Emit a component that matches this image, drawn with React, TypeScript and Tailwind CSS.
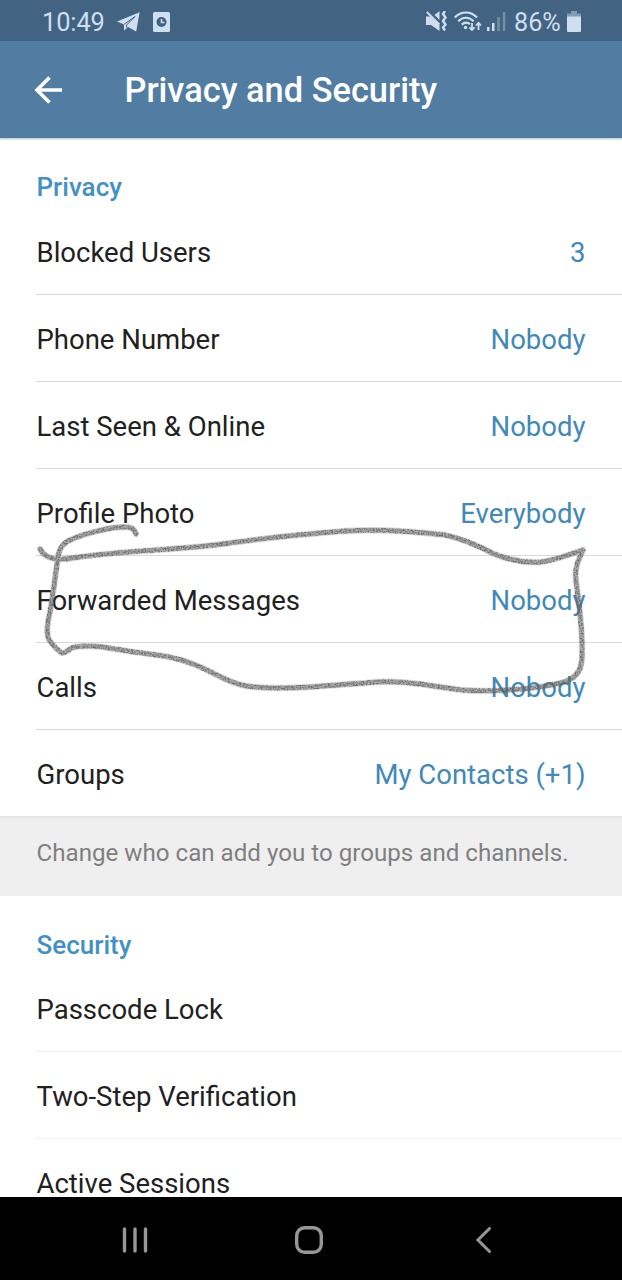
import React from "react";

interface Setting {
  label: string;
  value?: string;
}

const privacySettings: Setting[] = [
  { label: "Blocked Users", value: "3" },
  { label: "Phone Number", value: "Nobody" },
  { label: "Last Seen & Online", value: "Nobody" },
  { label: "Profile Photo", value: "Everybody" },
  { label: "Forwarded Messages", value: "Nobody" },
  { label: "Calls", value: "Nobody" },
  { label: "Groups", value: "My Contacts (+1)" },
];

const securitySettings: Setting[] = [
  { label: "Passcode Lock" },
  { label: "Two-Step Verification" },
  { label: "Active Sessions" },
];

function StatusBar() {
  return (
    <div className="flex h-[41px] shrink-0 items-center bg-[#426482] pl-[42px] pr-[41px] pt-[2px] text-[#cfdff0]">
      <span className="w-[63px] whitespace-nowrap pt-[2px] text-[25.4px] leading-none tracking-[-0.1px]">10:49</span>
      {/* paper plane */}
      <svg className="ml-[12px]" width="23" height="20" viewBox="0 0 23 20">
        <path d="M22.6.3 0 9.6l7 3v6.2l4-3.8 8.2 4.6z" fill="currentColor" />
        <path d="M7 12.3 18 4.6 9.6 13v2.6" fill="none" stroke="#426482" strokeWidth="1" />
      </svg>
      {/* clock card */}
      <svg className="ml-[13px]" width="17" height="20" viewBox="0 0 17 20">
        <rect width="17" height="20" rx="1.5" fill="currentColor" />
        <circle cx="8.5" cy="10" r="5" fill="#426482" />
        <path d="M8.5 7v3.5h3" fill="none" stroke="currentColor" strokeWidth="1.6" />
      </svg>

      <div className="ml-auto flex items-center">
        {/* muted, vibrating */}
        <svg width="21" height="20" viewBox="0 0 21 20" fill="none">
          <path d="M0 5.5h4.5l9 8.5v6L5 14H0zM8.5 4l5-4v9z" fill="currentColor" />
          <path d="m.8 1 12.7 12.5" stroke="currentColor" strokeWidth="1.8" />
          <path d="m19 0-2 3 2.5 3.5L17 10l2.5 3.5L17 16.5l2 3" stroke="currentColor" strokeWidth="2.4" />
        </svg>
        {/* wifi with traffic arrows */}
        <svg className="ml-[7px]" width="28" height="21" viewBox="0 0 28 21" fill="none" stroke="currentColor">
          <path d="M.8 6.5c6.2-6.7 16-6.7 22.2 0M4.2 10.2c4.4-4.6 11-4.6 15.4 0M7.8 13.6c2.5-2.5 5.8-2.5 8.2-.4" strokeWidth="2.2" />
          <circle cx="11.5" cy="16.5" r="1.7" fill="currentColor" stroke="none" />
          <path d="M18 12v7m-2.6-2.7L18 19l2.6-2.7M24.5 19v-7M22 14.5l2.5-2.7 2.5 2.7" strokeWidth="1.8" />
        </svg>
        {/* mobile signal */}
        <svg className="ml-[5px]" width="19" height="20" viewBox="0 0 19 20" fill="currentColor">
          <path d="M0 16h2.5v4H0zM5 12h2.5v8H5z" />
          <path d="M10.3 6h2.5v14h-2.5zM15.8 1h2.5v19h-2.5z" opacity=".35" />
        </svg>
        <span className="ml-[8px] w-[47px] whitespace-nowrap pt-[2px] text-[25.2px] leading-none">86%</span>
        <svg className="ml-[6px]" width="14" height="21" viewBox="0 0 14 21" fill="currentColor">
          <path d="M4 0h6v2.5h4V6H0V2.5h4z" opacity=".45" />
          <path d="M0 5.5h14V20a1 1 0 0 1-1 1H1a1 1 0 0 1-1-1z" />
        </svg>
      </div>
    </div>
  );
}

function SectionTitle({ children, height }: { children: React.ReactNode; height: string }) {
  return (
    <h2 className={`${height} pl-[36.5px] pt-[34px] text-[26px] font-medium leading-[30px] text-[#4391c4]`}>
      {children}
    </h2>
  );
}

function SettingRow({ label, value, line }: Setting & { line: string }) {
  return (
    <div className={`ml-[36px] flex h-[87px] items-center justify-between border-b pl-[0.5px] pr-[36.5px] pt-[3px] text-[27.5px] ${line}`}>
      <span className="text-[#212121]">{label}</span>
      {value && <span className="text-[#4189b8]">{value}</span>}
    </div>
  );
}

// Pencil loop drawn by hand around "Forwarded Messages"
function PencilMark() {
  return (
    <svg className="pointer-events-none absolute left-0 top-[500px]" width="622" height="210" viewBox="0 500 622 210" fill="none">
      <defs>
        <filter id="pencil" x="0" y="500" width="622" height="210" filterUnits="userSpaceOnUse">
          <feTurbulence type="fractalNoise" baseFrequency="0.6" numOctaves="2" seed="4" result="noise" />
          <feColorMatrix in="noise" type="matrix" values="0 0 0 0 0.15  0 0 0 0 0.15  0 0 0 0 0.15  3 0 0 0 -1.15" result="grain" />
          <feComposite in="grain" in2="SourceGraphic" operator="in" result="rough" />
          <feGaussianBlur in="rough" stdDeviation="0.5" />
        </filter>
      </defs>
      <g strokeLinecap="round" strokeLinejoin="round">
        <path d={loop} stroke="#555" strokeOpacity=".2" strokeWidth="6.4" />
        <path d={loop} stroke="#555" strokeOpacity=".38" strokeWidth="4.4" />
        <path d={loop} stroke="#222" strokeWidth="5" filter="url(#pencil)" />
      </g>
    </svg>
  );
}

const loop =
  "M136 534C134 528 131 527 124 527C110 527 82 534 68 541C59 546 58 555 57 564C55 580 53 594 50 612C47 624 46 634 49 640C53 645 58 651 62 653C68 653 68 648 75 647C95 644 114 649 134 652C156 655 173 656 193 664C214 672 225 682 246 686C282 691 329 685 366 683C403 679 430 686 461 690C500 693 550 687 567 681C577 677 582 669 582 656C583 630 579 603 576 581C574 568 579 559 583 550C570 554 557 560 541 562C524 563 508 560 492 553C477 545 463 539 445 535C411 531 379 529 345 531C302 534 258 539 215 545C172 550 118 551 73 558C56 561 45 559 40 549";

export default function App() {
  return (
    <div className="relative flex h-[1280px] w-[622px] flex-col overflow-hidden bg-white font-['Roboto',sans-serif]">
      <StatusBar />
      <header className="z-10 flex h-[97px] shrink-0 items-center bg-[#527da3] pl-[34px] text-white shadow-[0_1px_2px_rgba(60,90,120,0.4)]">
        <svg width="29" height="28" viewBox="0 0 29 28" fill="none" stroke="currentColor" strokeWidth="3.6">
          <path d="M28 14H3M15.5 1.5 3 14l12.5 12.5" />
        </svg>
        <h1 className="ml-[61.5px] text-[34.4px] font-medium leading-[34px]">Privacy and Security</h1>
      </header>

      <main className="min-h-0 flex-1 overflow-hidden">
        <section>
          <SectionTitle height="h-[70px]">Privacy</SectionTitle>
          {privacySettings.map((item, i) => (
            <SettingRow
              key={item.label}
              {...item}
              line={i === privacySettings.length - 1 ? "border-transparent" : "border-[#d9d9d9]"}
            />
          ))}
        </section>
        <p className="-mt-px flex h-[80px] items-center border-t border-[#e5e5e5] bg-[#efefef] pb-[7px] pl-[36.5px] text-[24.15px] text-[#808080] shadow-[inset_0_3px_3px_-2px_rgba(0,0,0,0.05)]">
          Change who can add you to groups and channels.
        </p>
        <section>
          <SectionTitle height="h-[69px]">Security</SectionTitle>
          {securitySettings.map((item) => (
            <SettingRow key={item.label} {...item} line="border-[#f0f0f0]" />
          ))}
        </section>
      </main>

      <nav className="flex h-[83px] shrink-0 items-center bg-black pl-[122px] pt-[3px] text-[#979797]">
        <svg width="26" height="26" viewBox="0 0 26 26" stroke="currentColor" strokeWidth="3.4" strokeLinecap="round">
          <path d="M2.5 2v22M13 2v22M23.5 2v22" />
        </svg>
        <svg className="ml-[147px]" width="28" height="28" viewBox="0 0 28 28" fill="none" stroke="currentColor" strokeWidth="3.4">
          <rect x="1.7" y="1.7" width="24.6" height="24.6" rx="8" />
        </svg>
        <svg className="ml-[152px]" width="17" height="26" viewBox="0 0 17 26" fill="none" stroke="currentColor" strokeWidth="3" strokeLinecap="round">
          <path d="M14.5 1.5 3 13l11.5 11.5" />
        </svg>
      </nav>

      <PencilMark />
    </div>
  );
}
